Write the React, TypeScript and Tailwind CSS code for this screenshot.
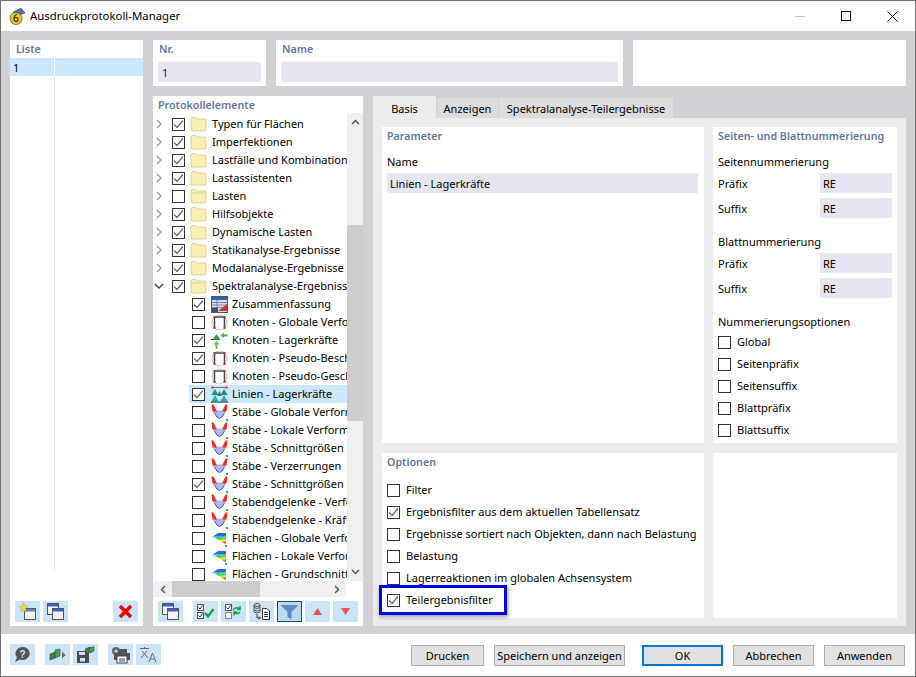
import React from 'react';

const font = { fontFamily: '"Noto Sans", sans-serif' };

function Chk({ on }: { on?: boolean }) {
  return (
    <span className="w-[13px] h-[13px] shrink-0 border border-[#333333] bg-white flex items-center justify-center">
      {on && (
        <svg width="11" height="11" viewBox="0 0 11 11">
          <path d="M1 5.500 L4 8.500 L10 1.500" fill="none" stroke="#666666" strokeWidth="1.200" />
        </svg>
      )}
    </span>
  );
}

function Folder({ open }: { open?: boolean }) {
  return (
    <svg width="17" height="16" viewBox="0 0 17 16" className="shrink-0">
      <path d="M1 3 Q1 1.500 2.500 1.500 H6 L7.500 3 H15 Q16 3 16 4 V14 Q16 15 15 15 H2 Q1 15 1 14 Z" fill="#f9efb4" stroke="#dccf94" />
      {open && <path d="M1.500 5 H15.500" stroke="#dccf94" />}
    </svg>
  );
}

function TableIcon() {
  return (
    <svg width="17" height="17" viewBox="0 0 17 17" className="shrink-0">
      <rect x="0.500" y="0.500" width="16" height="16" fill="#d8dce8" stroke="#4a5878" />
      <rect x="1" y="1" width="15" height="3" fill="#3560b0" />
      <path d="M1 6.500H16M1 9H16M1 11.500H16M6 4V16" stroke="#7787aa" />
      <path d="M7 15 L16 8 V15 Z" fill="#c8342c" />
      <rect x="1" y="12" width="6" height="4" fill="#3f4e70" />
    </svg>
  );
}

function FrameIcon() {
  return (
    <svg width="17" height="17" viewBox="0 0 17 17" className="shrink-0">
      <circle cx="8.500" cy="8.500" r="7.500" fill="none" stroke="#c4c4c4" />
      <path d="M3.500 14 V4.500 Q3.500 3 5 3 H12 Q13.500 3 13.500 4.500 V14" fill="none" stroke="#474747" strokeWidth="1.500" />
      <rect x="2.500" y="2" width="2" height="2" fill="#d82a2a" />
      <rect x="12.500" y="2" width="2" height="2" fill="#d82a2a" />
      <rect x="2.500" y="13" width="2" height="2" fill="#d82a2a" />
      <rect x="12.500" y="13" width="2" height="2" fill="#d82a2a" />
    </svg>
  );
}

function SupportIcon() {
  return (
    <svg width="17" height="17" viewBox="0 0 17 17" className="shrink-0">
      <path d="M5.500 2 L9.500 8 H1.500 Z" fill="#2f9a3c" />
      <path d="M4.500 17 V12.500 H2.500 L5.500 9 L8.500 12.500 H6.500 V17 Z" fill="#5fc04f" />
      <path d="M16.500 2.500 H13 V0.500 L9.500 3.500 L13 6 V4.500 H16.500 Z" fill="#4fb05a" />
      <rect x="0" y="7" width="3" height="1" fill="#333" />
    </svg>
  );
}

function LineIcon() {
  return (
    <svg width="17" height="17" viewBox="0 0 17 17" className="shrink-0">
      <path d="M1 1.500 H16" stroke="#9a6070" />
      <circle cx="1.500" cy="1.500" r="1.200" fill="#c83a4a" />
      <circle cx="15.500" cy="1.500" r="1.200" fill="#c83a4a" />
      <path d="M4 3 L7.500 9 H0.500 Z" fill="#1f8f86" />
      <path d="M13 3 L16.500 9 H9.500 Z" fill="#1f8f86" />
      <path d="M4 9 L7.500 15 H0.500 Z" fill="#3da89e" />
      <path d="M13 9 L16.500 15 H9.500 Z" fill="#3da89e" />
      <path d="M8.500 5 L11 10 H6 Z" fill="#2a7f8f" />
      <path d="M0 16 H17" stroke="#2a6f7f" strokeWidth="1.500" />
    </svg>
  );
}

function MemberIcon() {
  return (
    <svg width="17" height="17" viewBox="0 0 17 17" className="shrink-0">
      <path d="M3 8 Q8.500 21 14 8 Z" fill="#b0b4f4" stroke="#4450e8" />
      <path d="M2 6.500 H15 V9 H2 Z" fill="#b4b8cc" />
      <path d="M0.500 0.500 L2.500 0.500 L6 7.500 L1.500 7.500 Z" fill="#ee2a2a" />
      <path d="M16.500 0.500 L14.500 0.500 L11 7.500 L15.500 7.500 Z" fill="#ee2a2a" />
      <rect x="15" y="15" width="2" height="2" fill="#16c030" />
    </svg>
  );
}

function SurfaceIcon() {
  return (
    <svg width="17" height="17" viewBox="0 0 17 17" className="shrink-0">
      <path d="M1 7 L7 3 L15 3 L15 6 L6 6 Z" fill="#2c66e0" />
      <path d="M1 7 L6 6 L15 6 L15 7.500 L7 8 Z" fill="#22c8d0" />
      <path d="M3.500 8 L15 7.500 L15 9.500 L8 10 Z" fill="#58d03c" />
      <path d="M8 10 L15 9.500 L15 11.500 L11 12 Z" fill="#f4d820" />
      <path d="M11 12 L15 11.500 L15 14 Z" fill="#f04820" />
      <rect x="14" y="15" width="2" height="2" fill="#16c030" />
    </svg>
  );
}

function WinIcon({ star }: { star?: boolean }) {
  return (
    <svg width="17" height="17" viewBox="0 0 17 17">
      {!star && (
        <g>
          <rect x="0.500" y="0.500" width="11" height="11" fill="#f4f4f4" stroke="#555" />
          <rect x="1" y="1" width="10" height="2.500" fill="#3a5fd0" />
        </g>
      )}
      <rect x="5.500" y="5.500" width="11" height="11" fill="#f4f4f4" stroke="#555" />
      <rect x="6" y="6" width="10" height="2.500" fill={star ? '#6a7fc0' : '#3a5fd0'} />
      {star && <path d="M4.500 0 L5.800 3 L9 3.500 L6.500 5.700 L7.200 9 L4.500 7.300 L1.800 9 L2.500 5.700 L0 3.500 L3.200 3 Z" fill="#f4e31a" stroke="#999" strokeWidth="0.500" />}
    </svg>
  );
}

function IconBtn({ children, active, className = '' }: { children?: React.ReactNode; active?: boolean; className?: string }) {
  return (
    <div className={`w-[25px] h-[21px] shrink-0 flex items-center justify-center ${active ? 'bg-[#bcd9f2] border border-[#0d4f8b]' : 'bg-[#cce4f7]'} ${className}`}>
      {children}
    </div>
  );
}

function Heading({ children }: { children: React.ReactNode }) {
  return <div className="text-[10.7px] font-semibold leading-[18px] text-[#6474a0]">{children}</div>;
}

const folders: [string, boolean][] = [
  ['Typen für Flächen', true],
  ['Imperfektionen', true],
  ['Lastfälle und Kombinationen', true],
  ['Lastassistenten', true],
  ['Lasten', false],
  ['Hilfsobjekte', true],
  ['Dynamische Lasten', true],
  ['Statikanalyse-Ergebnisse', true],
  ['Modalanalyse-Ergebnisse', true],
];

const children: [string, boolean, React.ReactNode, boolean?][] = [
  ['Zusammenfassung', true, <TableIcon />],
  ['Knoten - Globale Verformungen', false, <FrameIcon />],
  ['Knoten - Lagerkräfte', true, <SupportIcon />],
  ['Knoten - Pseudo-Beschleunigungen', true, <FrameIcon />],
  ['Knoten - Pseudo-Geschwindigkeiten', false, <FrameIcon />],
  ['Linien - Lagerkräfte', true, <LineIcon />, true],
  ['Stäbe - Globale Verformungen', false, <MemberIcon />],
  ['Stäbe - Lokale Verformungen', false, <MemberIcon />],
  ['Stäbe - Schnittgrößen', false, <MemberIcon />],
  ['Stäbe - Verzerrungen', false, <MemberIcon />],
  ['Stäbe - Schnittgrößen', true, <MemberIcon />],
  ['Stabendgelenke - Verformungen', false, <MemberIcon />],
  ['Stabendgelenke - Kräfte', false, <MemberIcon />],
  ['Flächen - Globale Verformungen', false, <SurfaceIcon />],
  ['Flächen - Lokale Verformungen', false, <SurfaceIcon />],
  ['Flächen - Grundschnittgrößen', false, <SurfaceIcon />],
];

function Chevron({ open }: { open?: boolean }) {
  return (
    <svg width="10" height="10" viewBox="0 0 10 10" className="shrink-0">
      {open ? (
        <path d="M1 3 L5 7 L9 3" fill="none" stroke="#444" strokeWidth="1.500" />
      ) : (
        <path d="M3 1 L7 5 L3 9" fill="none" stroke="#a0a0a0" strokeWidth="1.500" />
      )}
    </svg>
  );
}

function Field({ label, value }: { label: string; value: string }) {
  return (
    <div className="flex items-center justify-between h-[20px] mb-[5px]">
      <span className="pt-px">{label}</span>
      <div className="w-[72px] h-[20px] bg-[#e6e6f0] pl-[3px] pt-px leading-[20px]">{value}</div>
    </div>
  );
}

function OptRow({ label, on }: { label: string; on?: boolean }) {
  return (
    <div className="flex items-center gap-[6px] h-[22px] whitespace-nowrap">
      <Chk on={on} />
      <span>{label}</span>
    </div>
  );
}

function TextBtn({ children, className = '' }: { children: React.ReactNode; className?: string }) {
  return (
    <div className={`h-[21px] mt-px flex items-center justify-center bg-[#e1e1e1] border border-[#adadad] whitespace-nowrap ${className}`}>
      {children}
    </div>
  );
}

export default function App() {
  return (
    <div style={font} className="w-[916px] h-[677px] bg-white border border-[#707070] flex flex-col text-[11px] leading-[18px] text-black overflow-hidden">
      {/* Title bar */}
      <div className="h-[30px] shrink-0 flex items-center pl-[8px] relative">
        <svg width="17" height="17" viewBox="0 0 17 17">
          <path d="M4 4 L12 0 L16 5 L9 8 Z" fill="#4f6fa8" stroke="#2f3f60" strokeWidth="0.500" />
          <circle cx="7" cy="10.500" r="6" fill="#eec81e" stroke="#6a5a10" strokeWidth="0.800" />
          <circle cx="7" cy="11.500" r="2" fill="none" stroke="#333" strokeWidth="1.200" />
          <path d="M5 11 Q5 7 8 6.500" fill="none" stroke="#333" strokeWidth="1.200" />
        </svg>
        <span className="ml-[4px] text-[11.4px]">Ausdruckprotokoll-Manager</span>
        <div className="ml-auto flex items-center">
          <div className="w-[46px] h-[30px] flex items-center justify-center">
            <div className="w-[10px] h-px bg-[#c0c0c0]" />
          </div>
          <div className="w-[46px] h-[30px] flex items-center justify-center">
            <div className="w-[10px] h-[10px] border border-black" />
          </div>
          <div className="w-[46px] h-[30px] flex items-center justify-center">
            <svg width="11" height="11" viewBox="0 0 11 11">
              <path d="M0.500 0.500 L10.500 10.500 M10.500 0.500 L0.500 10.500" stroke="#000" />
            </svg>
          </div>
        </div>
      </div>

      {/* Body */}
      <div className="h-[603px] shrink-0 bg-[#d0d0d5] px-[9px] pt-[9px] pb-[8px] flex gap-[10px]">
        {/* List */}
        <div className="w-[133px] h-[586px] bg-white flex flex-col">
          <div className="h-[18px] pl-[6px]"><Heading>Liste</Heading></div>
          <div className="h-[18px] bg-[#cce8ff] pl-[3px] pt-px flex">
            <span className="w-[41px]">1</span>
            <div className="w-px h-[18px] -mt-px bg-white" />
          </div>
          <div className="flex-1 ml-[44px] w-px bg-[#e8e8e8] mb-[30px]" />
          <div className="h-[25px] pb-[4px] pl-[5px] pr-[5px] flex gap-[3px]">
            <IconBtn><WinIcon star /></IconBtn>
            <IconBtn><WinIcon /></IconBtn>
            <IconBtn className="ml-auto">
              <svg width="15" height="15" viewBox="0 0 15 15">
                <path d="M2 2 L13 13 M13 2 L2 13" stroke="#f00000" strokeWidth="3.500" />
              </svg>
            </IconBtn>
          </div>
        </div>

        {/* Right */}
        <div className="w-[753px] flex flex-col gap-[10px]">
          <div className="h-[46px] flex gap-[10px]">
            <div className="w-[113px] bg-white px-[5px]">
              <div className="pl-px"><Heading>Nr.</Heading></div>
              <div className="h-[20px] mt-[4px] bg-[#e6e6f0] pl-[4px] pt-px leading-[20px] text-[#300060]">1</div>
            </div>
            <div className="w-[347px] bg-white px-[5px]">
              <div className="pl-px"><Heading>Name</Heading></div>
              <div className="h-[20px] mt-[4px] bg-[#e6e6f0]" />
            </div>
            <div className="w-[273px] bg-white" />
          </div>

          <div className="h-[530px] flex gap-[10px]">
            {/* Tree panel */}
            <div className="w-[210px] bg-white flex flex-col">
              <div className="h-[17px] pl-[5px]"><Heading>Protokollelemente</Heading></div>
              <div className="h-[468px] flex">
                <div className="w-[194px] pt-[2px] overflow-hidden whitespace-nowrap">
                  {folders.map(([t, on]) => (
                    <div key={t} className="h-[18px] flex items-center pl-[1px]">
                      <Chevron />
                      <span className="ml-[8px] flex"><Chk on={on} /></span>
                      <span className="ml-[5px] flex"><Folder open={!on} /></span>
                      <span className="ml-[5px]">{t}</span>
                    </div>
                  ))}
                  <div className="h-[18px] flex items-center pl-[1px]">
                    <Chevron open />
                    <span className="ml-[8px] flex"><Chk on /></span>
                    <span className="ml-[5px] flex"><Folder open /></span>
                    <span className="ml-[5px]">Spektralanalyse-Ergebnisse</span>
                  </div>
                  {children.map(([t, on, icon, sel], i) => (
                    <div key={i} className={`h-[18px] flex items-center ml-[36px] pl-[3px] ${sel ? 'bg-[#cce8ff]' : ''}`}>
                      <Chk on={on} />
                      <span className="ml-[6px] flex">{icon}</span>
                      <span className="ml-[4px]">{t}</span>
                    </div>
                  ))}
                </div>
                <div className="w-[16px] bg-[#f0f0f0] flex flex-col">
                  <div className="h-[112px] bg-[#f0f0f0] flex justify-center pt-[6px]">
                    <svg width="9" height="6" viewBox="0 0 9 6"><path d="M1 5 L4.500 1.500 L8 5" fill="none" stroke="#555" strokeWidth="1.500" /></svg>
                  </div>
                  <div className="h-[196px] bg-[#cdcdcd]" />
                  <div className="flex-1 flex justify-center items-end pb-[6px]">
                    <svg width="9" height="6" viewBox="0 0 9 6"><path d="M1 1 L4.500 4.500 L8 1" fill="none" stroke="#555" strokeWidth="1.500" /></svg>
                  </div>
                </div>
              </div>
              <div className="h-[16px] flex">
                <div className="w-[193px] bg-[#f0f0f0] flex items-center">
                  <div className="w-[19px] flex justify-center">
                    <svg width="6" height="9" viewBox="0 0 6 9"><path d="M5 1 L1.500 4.500 L5 8" fill="none" stroke="#555" strokeWidth="1.500" /></svg>
                  </div>
                  <div className="w-[88px] h-full bg-[#cdcdcd]" />
                  <div className="flex-1 flex justify-end pr-[6px]">
                    <svg width="6" height="9" viewBox="0 0 6 9"><path d="M1 1 L4.500 4.500 L1 8" fill="none" stroke="#555" strokeWidth="1.500" /></svg>
                  </div>
                </div>
              </div>
              <div className="h-[21px] mt-[4px] ml-[5px] flex">
                <IconBtn><WinIcon /></IconBtn>
                <IconBtn className="ml-[10px]">
                  <svg width="17" height="17" viewBox="0 0 17 17">
                    <rect x="0.500" y="1.500" width="6" height="6" fill="#fff" stroke="#555" />
                    <path d="M1.500 4.500 L3 6 L5.500 2.500" fill="none" stroke="#333" />
                    <rect x="0.500" y="9.500" width="6" height="6" fill="#fff" stroke="#555" />
                    <path d="M1.500 12.500 L3 14 L5.500 10.500" fill="none" stroke="#333" />
                    <path d="M8 10 L11 13.500 L16.500 6" fill="none" stroke="#14a03c" strokeWidth="2.200" />
                  </svg>
                </IconBtn>
                <IconBtn className="ml-[3px]">
                  <svg width="17" height="17" viewBox="0 0 17 17">
                    <rect x="0.500" y="1.500" width="6" height="6" fill="#fff" stroke="#555" />
                    <path d="M1.500 4.500 L3 6 L5.500 2.500" fill="none" stroke="#333" />
                    <rect x="0.500" y="9.500" width="6" height="6" fill="#f4f4f4" stroke="#888" />
                    <path d="M8 7 Q11 3 15 6 M15 3 V6.500 H12" fill="none" stroke="#14a03c" strokeWidth="1.500" />
                    <path d="M15 9 Q12 12 9 9.500 M9 12.500 V9 H12" fill="none" stroke="#14a03c" strokeWidth="1.500" />
                  </svg>
                </IconBtn>
                <IconBtn className="ml-[3px]">
                  <svg width="17" height="18" viewBox="0 0 17 18">
                    <ellipse cx="4" cy="2" rx="3" ry="1.500" fill="#d8d8d8" stroke="#555" />
                    <path d="M1 2 V9 Q4 11 7 9 V2 M1 4.500 Q4 6.500 7 4.500 M1 7 Q4 9 7 7" fill="none" stroke="#555" />
                    <path d="M4 11 V15 H7 M6 13.500 L7.500 15 L6 16.500" fill="none" stroke="#333" />
                    <path d="M9.500 5.500 H14 L16.500 8 V16.500 H9.500 Z" fill="#fff" stroke="#333" />
                    <path d="M11 9.500H15M11 11.500H15M11 13.500H15" stroke="#333" />
                  </svg>
                </IconBtn>
                <IconBtn active className="ml-[3px]">
                  <svg width="19" height="17" viewBox="0 0 19 17">
                    <path d="M0.500 2 H18.500 L11.500 9 V16.500 L7.500 14 V9 Z" fill="#5f88c0" />
                  </svg>
                </IconBtn>
                <IconBtn className="ml-[3px]">
                  <svg width="9" height="7" viewBox="0 0 9 7"><path d="M4.500 0 L9 7 H0 Z" fill="#e0555c" /></svg>
                </IconBtn>
                <IconBtn className="ml-[3px]">
                  <svg width="9" height="7" viewBox="0 0 9 7"><path d="M0 0 H9 L4.500 7 Z" fill="#e0555c" /></svg>
                </IconBtn>
              </div>
            </div>

            {/* Tabs */}
            <div className="w-[533px] flex flex-col">
              <div className="h-[22px] flex items-end gap-px shrink-0">
                <div className="w-[63px] h-[22px] bg-[#ececec] flex items-center justify-center pt-[3px]">Basis</div>
                <div className="w-[61px] h-[20px] bg-[#dcdcdc] flex items-center justify-center pt-px">Anzeigen</div>
                <div className="w-[174px] h-[20px] bg-[#dcdcdc] flex items-center justify-center pt-px whitespace-nowrap">Spektralanalyse-Teilergebnisse</div>
              </div>
              <div className="flex-1 bg-[#ececec] p-[9px] pb-[8px] pr-[9px] flex flex-col gap-[10px]">
                <div className="h-[316px] flex gap-[9px]">
                  <div className="w-[322px] bg-white px-[5px]">
                    <Heading>Parameter</Heading>
                    <div className="mt-[8px]">Name</div>
                    <div className="h-[20px] w-[311px] mt-[2px] bg-[#e6e6f0] pl-[3px] pt-px leading-[20px]">Linien - Lagerkräfte</div>
                  </div>
                  <div className="w-[184px] bg-white pl-[5px] pr-[5px] whitespace-nowrap">
                    <Heading>Seiten- und Blattnummerierung</Heading>
                    <div className="mt-[8px]">Seitennummerierung</div>
                    <div className="mt-[2px]">
                      <Field label="Präfix" value="RE" />
                      <Field label="Suffix" value="RE" />
                    </div>
                    <div className="mt-[15px]">Blattnummerierung</div>
                    <div className="mt-[2px]">
                      <Field label="Präfix" value="RE" />
                      <Field label="Suffix" value="RE" />
                    </div>
                    <div className="mt-[15px]">Nummerierungsoptionen</div>
                    <div>
                      <OptRow label="Global" />
                      <OptRow label="Seitenpräfix" />
                      <OptRow label="Seitensuffix" />
                      <OptRow label="Blattpräfix" />
                      <OptRow label="Blattsuffix" />
                    </div>
                  </div>
                </div>
                <div className="h-[165px] flex gap-[9px]">
                  <div className="w-[322px] bg-white px-[5px] relative">
                    <Heading>Optionen</Heading>
                    <div className="mt-[8px]">
                      <OptRow label="Filter" />
                      <OptRow label="Ergebnisfilter aus dem aktuellen Tabellensatz" on />
                      <OptRow label="Ergebnisse sortiert nach Objekten, dann nach Belastung" />
                      <OptRow label="Belastung" />
                      <OptRow label="Lagerreaktionen im globalen Achsensystem" />
                      <OptRow label="Teilergebnisfilter" on />
                    </div>
                    <div className="absolute left-[-3px] top-[132px] w-[128px] h-[30px] border-[3px] border-[#0000e6] shadow-[1px_2px_4px_rgba(0,0,0,0.4)]" />
                  </div>
                  <div className="w-[184px] bg-white" />
                </div>
              </div>
            </div>
          </div>
        </div>
      </div>

      {/* Footer */}
      <div className="flex-1 flex items-start pt-[10px] pl-[9px] pr-[10px]">
        <IconBtn>
          <svg width="17" height="17" viewBox="0 0 17 17">
            <path d="M8.500 1 A7 6.500 0 1 1 6 13.500 L1 16 L3 11.500 A7 6.500 0 0 1 8.500 1 Z" fill="#555" />
            <text x="8.500" y="11.500" textAnchor="middle" fontSize="10" fontWeight="bold" fill="#cce4f7" fontFamily="Liberation Sans">?</text>
          </svg>
        </IconBtn>
        <IconBtn className="ml-[10px]">
          <svg width="19" height="17" viewBox="0 0 19 17">
            <path d="M2 8 L7 6 V12 L2 14 Z" fill="#2d8a4c" stroke="#333" strokeWidth="0.500" />
            <path d="M7 4 L12 3 V10 L7 12 Z" fill="#4a9a5c" stroke="#333" strokeWidth="0.500" />
            <path d="M14 5.500 L17.500 9 L14 12.500 Z" fill="#666" />
          </svg>
        </IconBtn>
        <IconBtn className="ml-[3px]">
          <svg width="19" height="18" viewBox="0 0 19 18">
            <path d="M1 5 H11 L13 7 V17 H1 Z" fill="#4a4a4a" />
            <rect x="3" y="6" width="6" height="3" fill="#cce4f7" />
            <rect x="4" y="12" width="5" height="3.500" fill="#cce4f7" />
            <path d="M9 3 L14 1 V6 L11 8 Z" fill="#2d8a4c" stroke="#333" strokeWidth="0.500" />
            <path d="M13 2 L18 0.500 V5 L14 7 Z" fill="#4a9a5c" stroke="#333" strokeWidth="0.500" />
          </svg>
        </IconBtn>
        <IconBtn className="ml-[10px]">
          <svg width="20" height="18" viewBox="0 0 20 18">
            <circle cx="5" cy="5" r="4" fill="#666" />
            <circle cx="5" cy="5" r="1.500" fill="#cce4f7" />
            <rect x="8" y="3" width="8" height="4" fill="#555" />
            <rect x="3" y="7" width="16" height="7" fill="#555" />
            <rect x="6" y="10" width="10" height="7" fill="#fff" stroke="#444" />
            <path d="M8 13H14M8 15H14" stroke="#444" />
          </svg>
        </IconBtn>
        <IconBtn className="ml-[3px]">
          <svg width="19" height="17" viewBox="0 0 19 17" fill="none" stroke="#666" strokeWidth="1">
            <path d="M1 2.500H10M5.500 1V2.500M2 12 L8 5M3 5 L9 12" />
            <path d="M10 16 L13.500 7 L17 16M11.500 13H15.500" />
          </svg>
        </IconBtn>
        <TextBtn className="w-[73px] ml-[250px]">Drucken</TextBtn>
        <TextBtn className="w-[131px] ml-[10px]">Speichern und anzeigen</TextBtn>
        <div className="w-[81px] h-[21px] mt-px ml-[17px] flex items-center justify-center bg-[#e1e1e1] border-2 border-[#0078d7]">OK</div>
        <TextBtn className="w-[81px] ml-[10px]">Abbrechen</TextBtn>
        <TextBtn className="w-[81px] ml-[10px]">Anwenden</TextBtn>
      </div>
    </div>
  );
}
